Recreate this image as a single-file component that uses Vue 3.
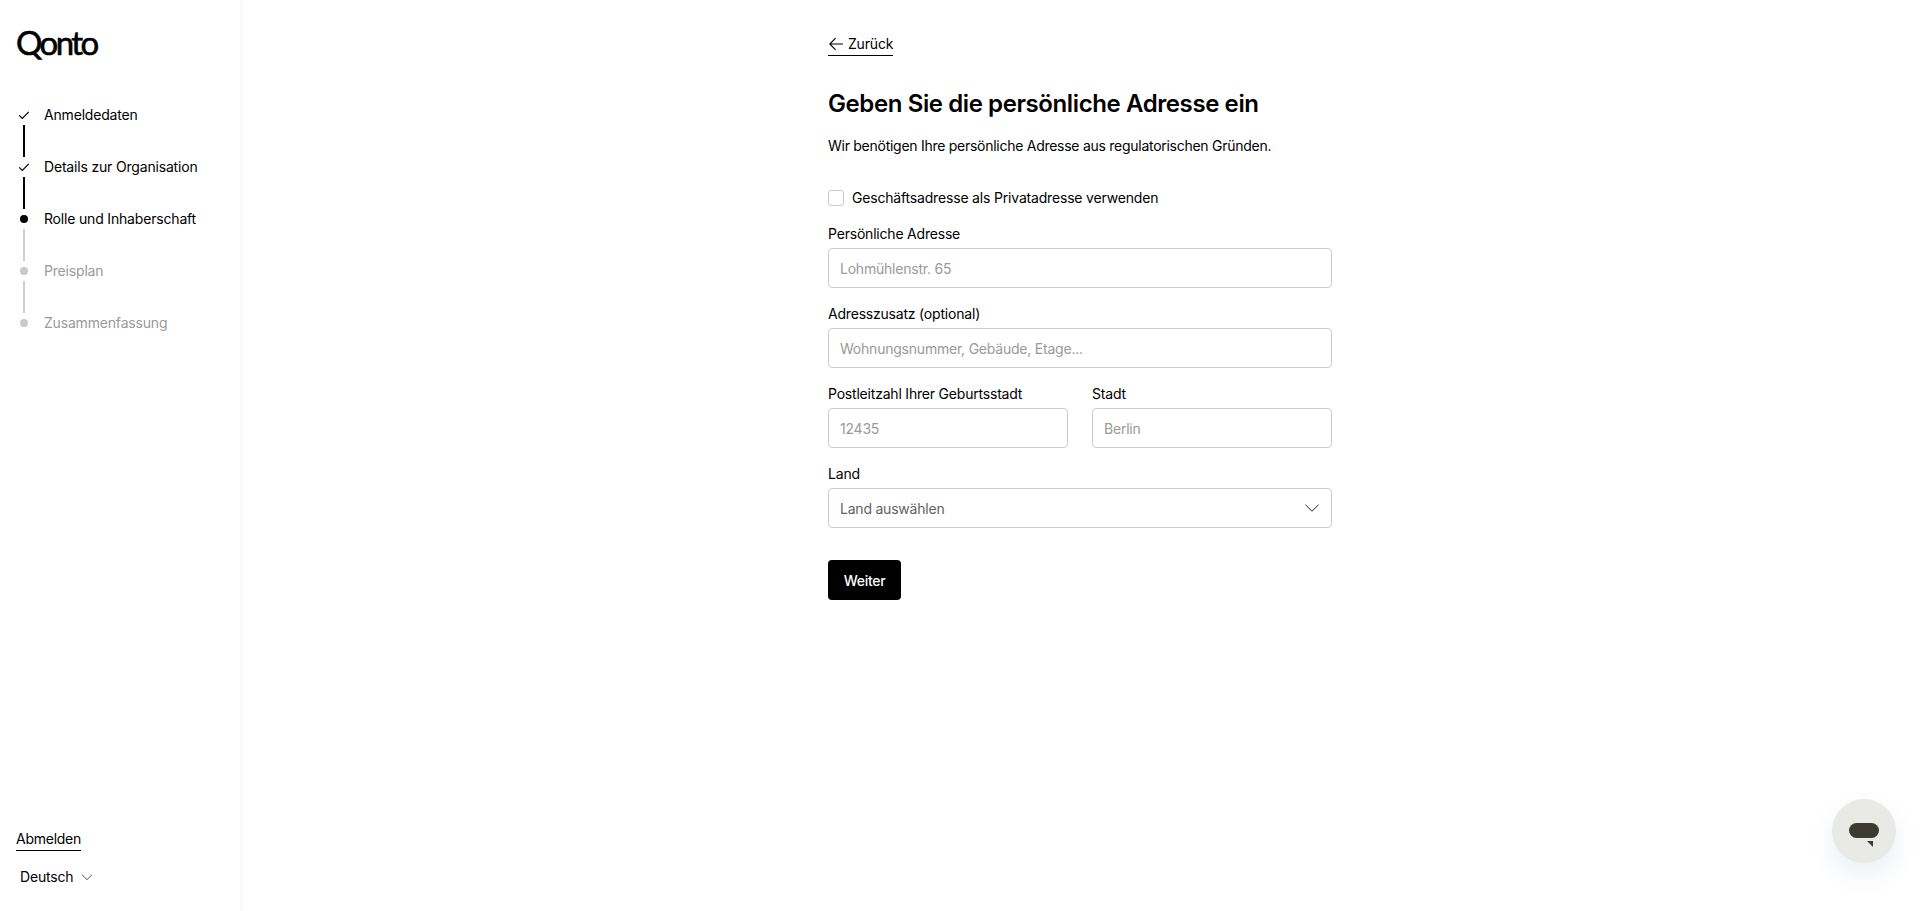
<script setup>
const steps = [
  { label: 'Anmeldedaten', state: 'done' },
  { label: 'Details zur Organisation', state: 'done' },
  { label: 'Rolle und Inhaberschaft', state: 'current' },
  { label: 'Preisplan', state: 'todo' },
  { label: 'Zusammenfassung', state: 'todo' }
]
</script>

<template>
  <div class="page">
    <aside class="sidebar">
      <div>
        <div class="logo">Qonto</div>
        <ul class="steps">
          <li v-for="(step, i) in steps" :key="step.label" class="step" :class="step.state">
            <div class="marker">
              <svg v-if="step.state === 'done'" width="12" height="12" viewBox="0 0 12 12" fill="none">
                <path d="M1.2 6.4 4.3 9.4 10.8 2.8" stroke="#000" stroke-width="1.2" />
              </svg>
              <span v-else class="dot"></span>
              <span v-if="i < steps.length - 1" class="connector"></span>
            </div>
            <span class="step-label">{{ step.label }}</span>
          </li>
        </ul>
      </div>
      <div class="sidebar-foot">
        <a class="link signout">Abmelden</a>
        <div class="lang">
          <span>Deutsch</span>
          <svg width="12" height="12" viewBox="0 0 12 12" fill="none">
            <path d="M1 3.8 6 8.6 11 3.8" stroke="#555" stroke-width="1" />
          </svg>
        </div>
      </div>
    </aside>

    <main class="main">
      <div class="content">
        <a class="link back">
          <svg width="16" height="16" viewBox="0 0 16 16" fill="none">
            <path d="M15 8H2M7.6 2.2 1.8 8l5.8 5.8" stroke="#000" stroke-width="1.1" />
          </svg>
          Zurück
        </a>
        <h1>Geben Sie die persönliche Adresse ein</h1>
        <p class="intro">Wir benötigen Ihre persönliche Adresse aus regulatorischen Gründen.</p>

        <label class="check">
          <span class="box"></span>
          Geschäftsadresse als Privatadresse verwenden
        </label>

        <div class="field">
          <label>Persönliche Adresse</label>
          <input type="text" placeholder="Lohmühlenstr. 65" />
        </div>
        <div class="field">
          <label>Adresszusatz (optional)</label>
          <input type="text" placeholder="Wohnungsnummer, Gebäude, Etage..." />
        </div>
        <div class="row">
          <div class="field">
            <label>Postleitzahl Ihrer Geburtsstadt</label>
            <input type="text" placeholder="12435" />
          </div>
          <div class="field">
            <label>Stadt</label>
            <input type="text" placeholder="Berlin" />
          </div>
        </div>
        <div class="field">
          <label>Land</label>
          <div class="select">
            <span>Land auswählen</span>
            <svg width="16" height="16" viewBox="0 0 16 16" fill="none">
              <path d="M1.5 4.8 8 11.2l6.5-6.4" stroke="#222" stroke-width="1" />
            </svg>
          </div>
        </div>
        <button class="next" type="button">Weiter</button>
      </div>
    </main>

    <button class="chat" type="button" aria-label="Chat">
      <svg width="30" height="24" viewBox="0 0 30 24" fill="#3b3b33">
        <rect x="0" y="0" width="30" height="15" rx="7.5" />
        <path d="M18 18h6v6z" />
      </svg>
    </button>
  </div>
</template>

<style>
html,
body {
  margin: 0;
  background: #fff;
}
</style>

<style scoped>
.page {
  display: flex;
  height: 911px;
  overflow: hidden;
  font-family: Inter, "Liberation Sans", sans-serif;
  font-size: 14px;
  letter-spacing: -0.18px;
  color: #000;
  background: #fff;
}

.sidebar {
  width: 240px;
  flex-shrink: 0;
  box-sizing: border-box;
  padding: 26px 0 0 16px;
  display: flex;
  flex-direction: column;
  justify-content: space-between;
  box-shadow: 3px 0 0 #fafafa;
}

.logo {
  font-family: Lato, Inter, sans-serif;
  font-size: 33px;
  line-height: 32px;
  height: 32px;
  letter-spacing: -2.6px;
  font-weight: 400;
  -webkit-text-stroke: 0.6px #000;
}

.steps {
  list-style: none;
  margin: 45px 0 0;
  padding: 0;
}

.step {
  display: flex;
  align-items: flex-start;
  height: 52px;
  line-height: 24px;
}

.marker {
  position: relative;
  width: 15px;
  height: 24px;
  margin-right: 13px;
  display: flex;
  align-items: center;
  justify-content: center;
}

.dot {
  width: 8px;
  height: 8px;
  border-radius: 50%;
  background: #000;
}

.connector {
  position: absolute;
  left: 6.5px;
  top: 22px;
  width: 2px;
  height: 32px;
  background: #000;
}

.step.current .connector,
.step.todo .connector {
  background: #cfcfcd;
}

.step.todo .dot {
  background: #c9c9c7;
}

.step.todo .step-label {
  color: #9a9a97;
}

.sidebar-foot {
  padding-bottom: 24px;
}

.link {
  display: inline-block;
  border-bottom: 1px solid #000;
  line-height: 20px;
}

.signout {
  display: table;
  padding-bottom: 1px;
  letter-spacing: -0.25px;
}

.lang {
  display: flex;
  align-items: center;
  gap: 8px;
  margin: 16px 0 0 4px;
  line-height: 20px;
}

.main {
  flex: 1;
  display: flex;
  justify-content: center;
}

.content {
  width: 504px;
  padding-top: 32px;
}

.back {
  display: inline-flex;
  align-items: center;
  gap: 4px;
  height: 23px;
}

h1 {
  margin: 32px 0 0;
  font-size: 24px;
  line-height: 32px;
  font-weight: 600;
  letter-spacing: -0.4px;
}

.intro {
  margin: 14px 0 0;
  line-height: 24px;
  letter-spacing: -0.27px;
}

.check {
  display: flex;
  align-items: center;
  gap: 8px;
  margin: 29px 0 -1px;
  line-height: 22px;
}

.box {
  width: 14px;
  height: 14px;
  border: 1px solid #ccc;
  border-radius: 3px;
}

.field {
  display: flex;
  flex-direction: column;
  flex: 1;
  min-width: 0;
  margin-top: 14px;
}

.field label {
  line-height: 24px;
  margin-bottom: 2px;
  letter-spacing: -0.2px;
}

.field input,
.select {
  box-sizing: border-box;
  width: 100%;
  height: 40px;
  padding: 0 11px;
  border: 1px solid #ccc;
  border-radius: 4px;
  font-family: inherit;
  font-size: 14px;
  letter-spacing: -0.22px;
  outline: none;
  background: #fff;
}

.field input::placeholder {
  color: #9a9a97;
  opacity: 1;
}

.select {
  display: flex;
  align-items: center;
  justify-content: space-between;
  color: #636360;
}

.row {
  display: flex;
  gap: 24px;
}

.next {
  display: block;
  margin-top: 32px;
  width: 73px;
  height: 40px;
  border: 0;
  border-radius: 4px;
  background: #000;
  color: #fff;
  font-family: inherit;
  font-size: 14px;
  font-weight: 500;
  letter-spacing: -0.3px;
}

.chat {
  position: fixed;
  right: 24px;
  bottom: 48px;
  width: 64px;
  height: 64px;
  padding: 7px 0 0;
  border: 0;
  border-radius: 50%;
  background: #e9e9e5;
  box-shadow: 0 12px 24px rgba(90, 120, 170, 0.12);
  display: flex;
  align-items: center;
  justify-content: center;
}
</style>
